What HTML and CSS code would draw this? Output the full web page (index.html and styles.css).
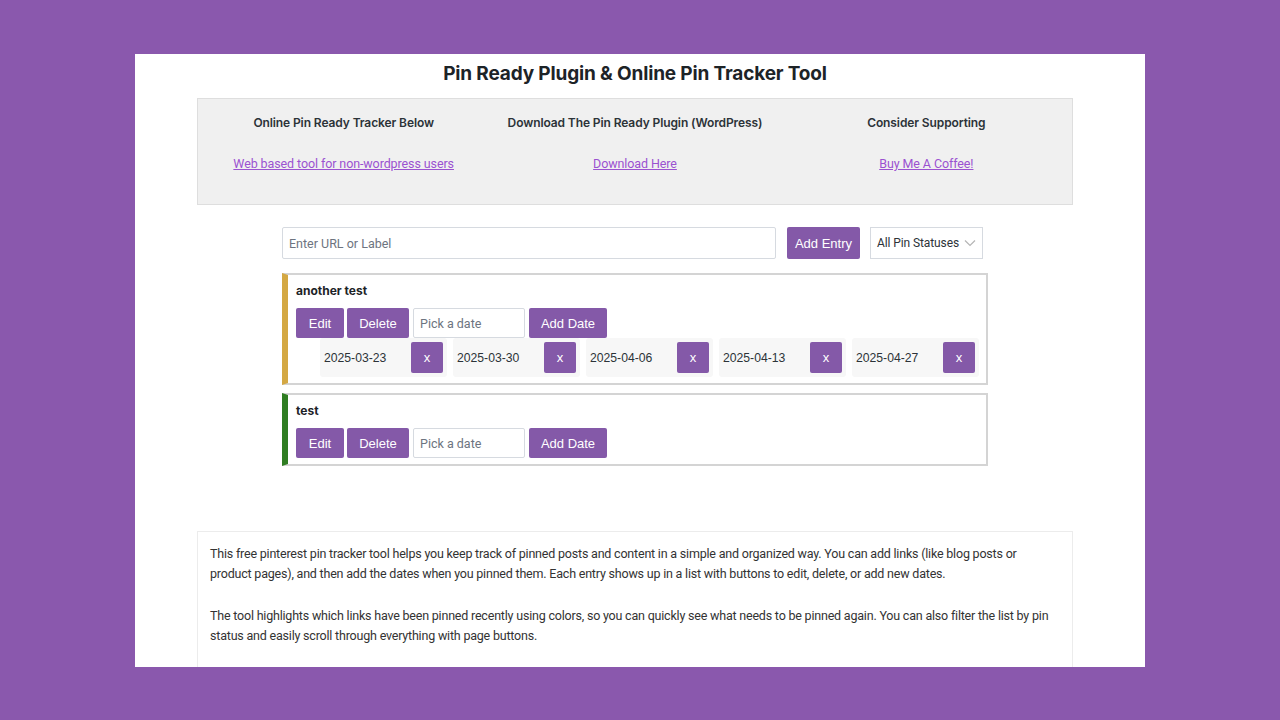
FILE: index.html
```html
<!DOCTYPE html>
<html lang="en">
<head>
<meta charset="utf-8">
<title>Pin Ready Plugin &amp; Online Pin Tracker Tool</title>
<link rel="stylesheet" href="styles.css">
</head>
<body>
<div class="panel">
  <h1 class="title">Pin Ready Plugin &amp; Online Pin Tracker Tool</h1>
  <div class="info">
    <div class="info-col">
      <h4>Online Pin Ready Tracker Below</h4>
      <a href="#">Web based tool for non-wordpress users</a>
    </div>
    <div class="info-col">
      <h4>Download The Pin Ready Plugin (WordPress)</h4>
      <a href="#">Download Here</a>
    </div>
    <div class="info-col">
      <h4>Consider Supporting</h4>
      <a href="#">Buy Me A Coffee!</a>
    </div>
  </div>

  <div class="tool">
    <div class="add-row">
      <input class="url-input" type="text" placeholder="Enter URL or Label">
      <button class="btn btn-entry">Add Entry</button>
      <div class="select">
        <span>All Pin Statuses</span>
        <svg width="12" height="8" viewBox="0 0 12 8"><path d="M1 1.5 L6 6.5 L11 1.5" fill="none" stroke="#b5b5b5" stroke-width="1.2"/></svg>
      </div>
    </div>

    <div class="entry entry-gold">
      <div class="entry-title">another test</div>
      <div class="entry-actions">
        <button class="btn btn-edit">Edit</button>
        <button class="btn btn-delete">Delete</button>
        <input class="date-input" type="text" placeholder="Pick a date">
        <button class="btn btn-add">Add Date</button>
      </div>
      <ul class="dates">
        <li class="chip"><span>2025-03-23</span><button class="btn btn-x">x</button></li>
        <li class="chip"><span>2025-03-30</span><button class="btn btn-x">x</button></li>
        <li class="chip"><span>2025-04-06</span><button class="btn btn-x">x</button></li>
        <li class="chip"><span>2025-04-13</span><button class="btn btn-x">x</button></li>
        <li class="chip"><span>2025-04-27</span><button class="btn btn-x">x</button></li>
      </ul>
    </div>

    <div class="entry entry-green">
      <div class="entry-title">test</div>
      <div class="entry-actions">
        <button class="btn btn-edit">Edit</button>
        <button class="btn btn-delete">Delete</button>
        <input class="date-input" type="text" placeholder="Pick a date">
        <button class="btn btn-add">Add Date</button>
      </div>
    </div>
  </div>

  <div class="desc">
    <p>This free pinterest pin tracker tool helps you keep track of pinned posts and content in a simple and organized way. You can add links (like blog posts or product pages), and then add the dates when you pinned them. Each entry shows up in a list with buttons to edit, delete, or add new dates.</p>
    <p>The tool highlights which links have been pinned recently using colors, so you can quickly see what needs to be pinned again. You can also filter the list by pin status and easily scroll through everything with page buttons.</p>
  </div>
</div>
</body>
</html>
```
FILE: styles.css
```css
* { box-sizing: border-box; }
html, body { margin: 0; padding: 0; }
body {
  background: #8a58ad;
  height: 720px;
  overflow: hidden;
  padding-top: 54px;
  font-family: Roboto, "Liberation Sans", sans-serif;
  color: #333;
}
.panel {
  width: 1010px;
  height: 613px;
  margin: 0 auto;
  background: #fff;
  overflow: hidden;
  padding: 8px 72px 0 62px;
}
.title {
  margin: 0;
  text-align: center;
  font-family: Inter, "Liberation Sans", sans-serif;
  font-size: 19px;
  letter-spacing: -0.15px;
  line-height: 24px;
  font-weight: 700;
  color: #1d2327;
}
.info {
  margin-top: 12px;
  background: #f0f0f0;
  border: 1px solid #dedede;
  display: grid;
  grid-template-columns: 1fr 1fr 1fr;
  height: 107px;
  padding-top: 16px;
}
.info-col {
  text-align: center;
  display: flex;
  flex-direction: column;
  align-items: center;
}
.info-col h4 {
  margin: 0;
  font-family: Inter, "Liberation Sans", sans-serif;
  font-size: 12px;
  letter-spacing: -0.1px;
  line-height: 16px;
  font-weight: 600;
  color: #2c3338;
}
.info-col a {
  margin-top: 25px;
  font-size: 12.5px;
  letter-spacing: -0.1px;
  line-height: 16px;
  color: #9b52d0;
  text-decoration: underline;
}
.tool {
  width: 706px;
  margin: 22px auto 0;
}
.add-row {
  display: flex;
  align-items: center;
  height: 32px;
}
.url-input {
  width: 494px;
  height: 32px;
  border: 1px solid #d6dae0;
  border-radius: 2px;
  padding: 0 6px;
  font-family: Roboto, "Liberation Sans", sans-serif;
  font-size: 12.5px;
  color: #333;
  outline: none;
}
.url-input::placeholder, .date-input::placeholder { color: #6d7480; }
.btn {
  border: none;
  background: #8459a8;
  color: #fff;
  font-family: "Liberation Sans", Arial, sans-serif;
  font-size: 13px;
  border-radius: 2px;
  padding: 0;
  cursor: pointer;
}
.btn-entry {
  margin-left: 11px;
  width: 73px;
  height: 32px;
}
.select {
  margin-left: 10px;
  width: 113px;
  height: 32px;
  border: 1px solid #d6dae0;
  display: flex;
  align-items: center;
  justify-content: space-between;
  padding: 0 6px 0 6px;
  white-space: nowrap;
  font-family: Roboto, "Liberation Sans", sans-serif;
  font-size: 12px;
  letter-spacing: -0.1px;
  color: #2c3338;
}
.entry {
  margin-top: 14px;
  border: 2px solid #d4d4d4;
  border-left: 6px solid #d4a843;
  padding: 8px 6px 6px 8px;
}
.entry + .entry { margin-top: 8px; }
.entry-green { border-left-color: #2f7d22; }
.entry-title {
  font-family: Inter, "Liberation Sans", sans-serif;
  font-size: 12px;
  line-height: 16px;
  font-weight: 700;
  color: #1d2327;
}
.entry-actions {
  margin-top: 9px;
  display: flex;
  height: 30px;
}
.btn-edit { width: 48px; height: 30px; }
.btn-delete { width: 62px; height: 30px; margin-left: 3px; }
.date-input {
  margin-left: 4px;
  width: 112px;
  height: 30px;
  border: 1px solid #d6dae0;
  border-radius: 2px;
  padding: 0 6px;
  font-family: Roboto, "Liberation Sans", sans-serif;
  font-size: 12.5px;
  outline: none;
}
.btn-add { width: 78px; height: 30px; margin-left: 4px; }
.dates {
  list-style: none;
  margin: 0;
  padding: 0 0 0 24px;
  display: flex;
  gap: 6px;
}
.chip {
  width: 127px;
  height: 39px;
  background: #f7f7f7;
  border-radius: 3px;
  display: flex;
  align-items: center;
  justify-content: space-between;
  padding: 0 4px 0 4px;
  font-family: "Liberation Sans", Arial, sans-serif;
  font-size: 12.2px;
  color: #2c3338;
}
.btn-x {
  width: 32px;
  height: 31px;
  font-size: 13px;
}
.desc {
  margin-top: 65px;
  border: 1px solid #ececec;
  padding: 12px 12px 0 12px;
  height: 200px;
}
.desc p {
  margin: 0 0 22px;
  font-size: 12.5px;
  letter-spacing: -0.2px;
  line-height: 20px;
  color: #333;
}
```
